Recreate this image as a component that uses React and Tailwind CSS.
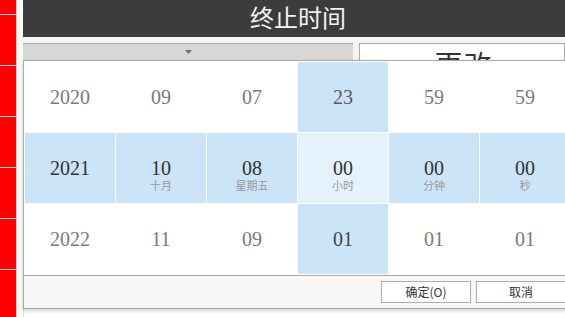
import React from "react";

const cjk = { fontFamily: '"Noto Sans CJK SC", "Noto Sans", sans-serif' };

const rows = [
  [
    { n: "2020", c: "text-[#7a7a7a]" },
    { n: "09", c: "text-[#7a7a7a]" },
    { n: "07", c: "text-[#7a7a7a]" },
    { n: "23", c: "text-[#5a5a5a]", bg: "bg-[#cce4f7]" },
    { n: "59", c: "text-[#7a7a7a]" },
    { n: "59", c: "text-[#7a7a7a]" },
  ],
  [
    { n: "2021", c: "text-[#333]", bg: "bg-[#cce4f7]" },
    { n: "10", l: "十月", c: "text-[#333]", bg: "bg-[#cce4f7]" },
    { n: "08", l: "星期五", c: "text-[#333]", bg: "bg-[#cce4f7]" },
    { n: "00", l: "小时", c: "text-[#333]", bg: "bg-[#e5f1fb]" },
    { n: "00", l: "分钟", c: "text-[#333]", bg: "bg-[#cce4f7]" },
    { n: "00", l: "秒", c: "text-[#333]", bg: "bg-[#cce4f7]" },
  ],
  [
    { n: "2022", c: "text-[#7a7a7a]" },
    { n: "11", c: "text-[#7a7a7a]" },
    { n: "09", c: "text-[#7a7a7a]" },
    { n: "01", c: "text-[#444]", bg: "bg-[#cce4f7]" },
    { n: "01", c: "text-[#7a7a7a]" },
    { n: "01", c: "text-[#7a7a7a]" },
  ],
];

function Cell({ n, l, c, bg }) {
  return (
    <div className={`relative h-[70px] flex items-center justify-center ${bg || "bg-white"}`}>
      <span
        className={`font-['Liberation_Serif','Times_New_Roman','DejaVu_Serif',serif] text-[20px] leading-[20px] ${c}`}
      >
        {n}
      </span>
      {l && (
        <span
          className="absolute left-0 right-0 top-[47px] text-center text-[11px] leading-[11px] text-[#999]"
          style={cjk}
        >
          {l}
        </span>
      )}
    </div>
  );
}

export default function App() {
  const sideItems = [0, 1, 2, 3, 4, 5];
  return (
    <div className="w-[565px] h-[317px] overflow-hidden flex bg-white relative">
      {/* left red strip */}
      <div className="w-[16px] h-full bg-[#ff0000] flex flex-col">
        <div className="h-[14px] shrink-0" />
        {sideItems.map((i) => (
          <div key={i} className="h-[51px] shrink-0 border-t border-[#dedede]" />
        ))}
      </div>
      <div className="w-px h-full bg-[#d2d2d2]" />
      <div className="w-[6px] h-full bg-[#fbfbfb]" />

      {/* main */}
      <div className="flex-1 flex flex-col relative">
        <div className="h-[37px] bg-[#3c3c3c] flex justify-center pl-[8px] pt-[1px]">
          <span className="text-[24px] leading-[32px] text-[#f2f2f2]" style={cjk}>
            终止时间
          </span>
        </div>
        <div className="h-[6px] bg-[#f4f4f4]" />
        <div className="flex gap-[6px] bg-[#f4f4f4]">
          <div className="w-[330px] h-[18px] bg-[#d7d7d7] border-y border-[#a9a9a9] flex items-center justify-center">
            <svg width="7" height="4" viewBox="0 0 7 4">
              <path d="M0 0 H7 L3.5 4 Z" fill="#707070" />
            </svg>
          </div>
          <div className="flex-1 h-[40px] bg-white border border-[#a9a9a9] flex justify-center pl-[3px] pt-[6px]">
            <span className="text-[28px] leading-[28px] text-[#333] tracking-[1px]" style={cjk}>
              更改
            </span>
          </div>
        </div>
        <div className="flex-1 bg-white border-l border-[#dddddd]" />

        {/* picker popup */}
        <div className="absolute left-0 top-[60px] w-[549px] border border-[#a9a9a9] bg-white shadow-[0_2px_4px_rgba(0,0,0,0.18)]">
          <div className="grid grid-cols-[repeat(6,90px)] gap-[1px] p-[1px] bg-white">
            {rows.flat().map((cell, i) => (
              <Cell key={i} {...cell} />
            ))}
          </div>
          <div className="h-[33px] border-t border-[#a9a9a9] bg-[#f7f7f7] flex justify-end items-start gap-[5px] pr-[5px] pt-[5px]">
            <button
              className="w-[90px] h-[22px] bg-white border border-[#adadad] text-[12px] leading-[20px] text-[#333] text-center"
              style={cjk}
            >
              确定(O)
            </button>
            <button
              className="w-[90px] h-[22px] bg-white border border-[#adadad] text-[12px] leading-[20px] text-[#333] text-center"
              style={cjk}
            >
              取消
            </button>
          </div>
        </div>
      </div>
    </div>
  );
}
